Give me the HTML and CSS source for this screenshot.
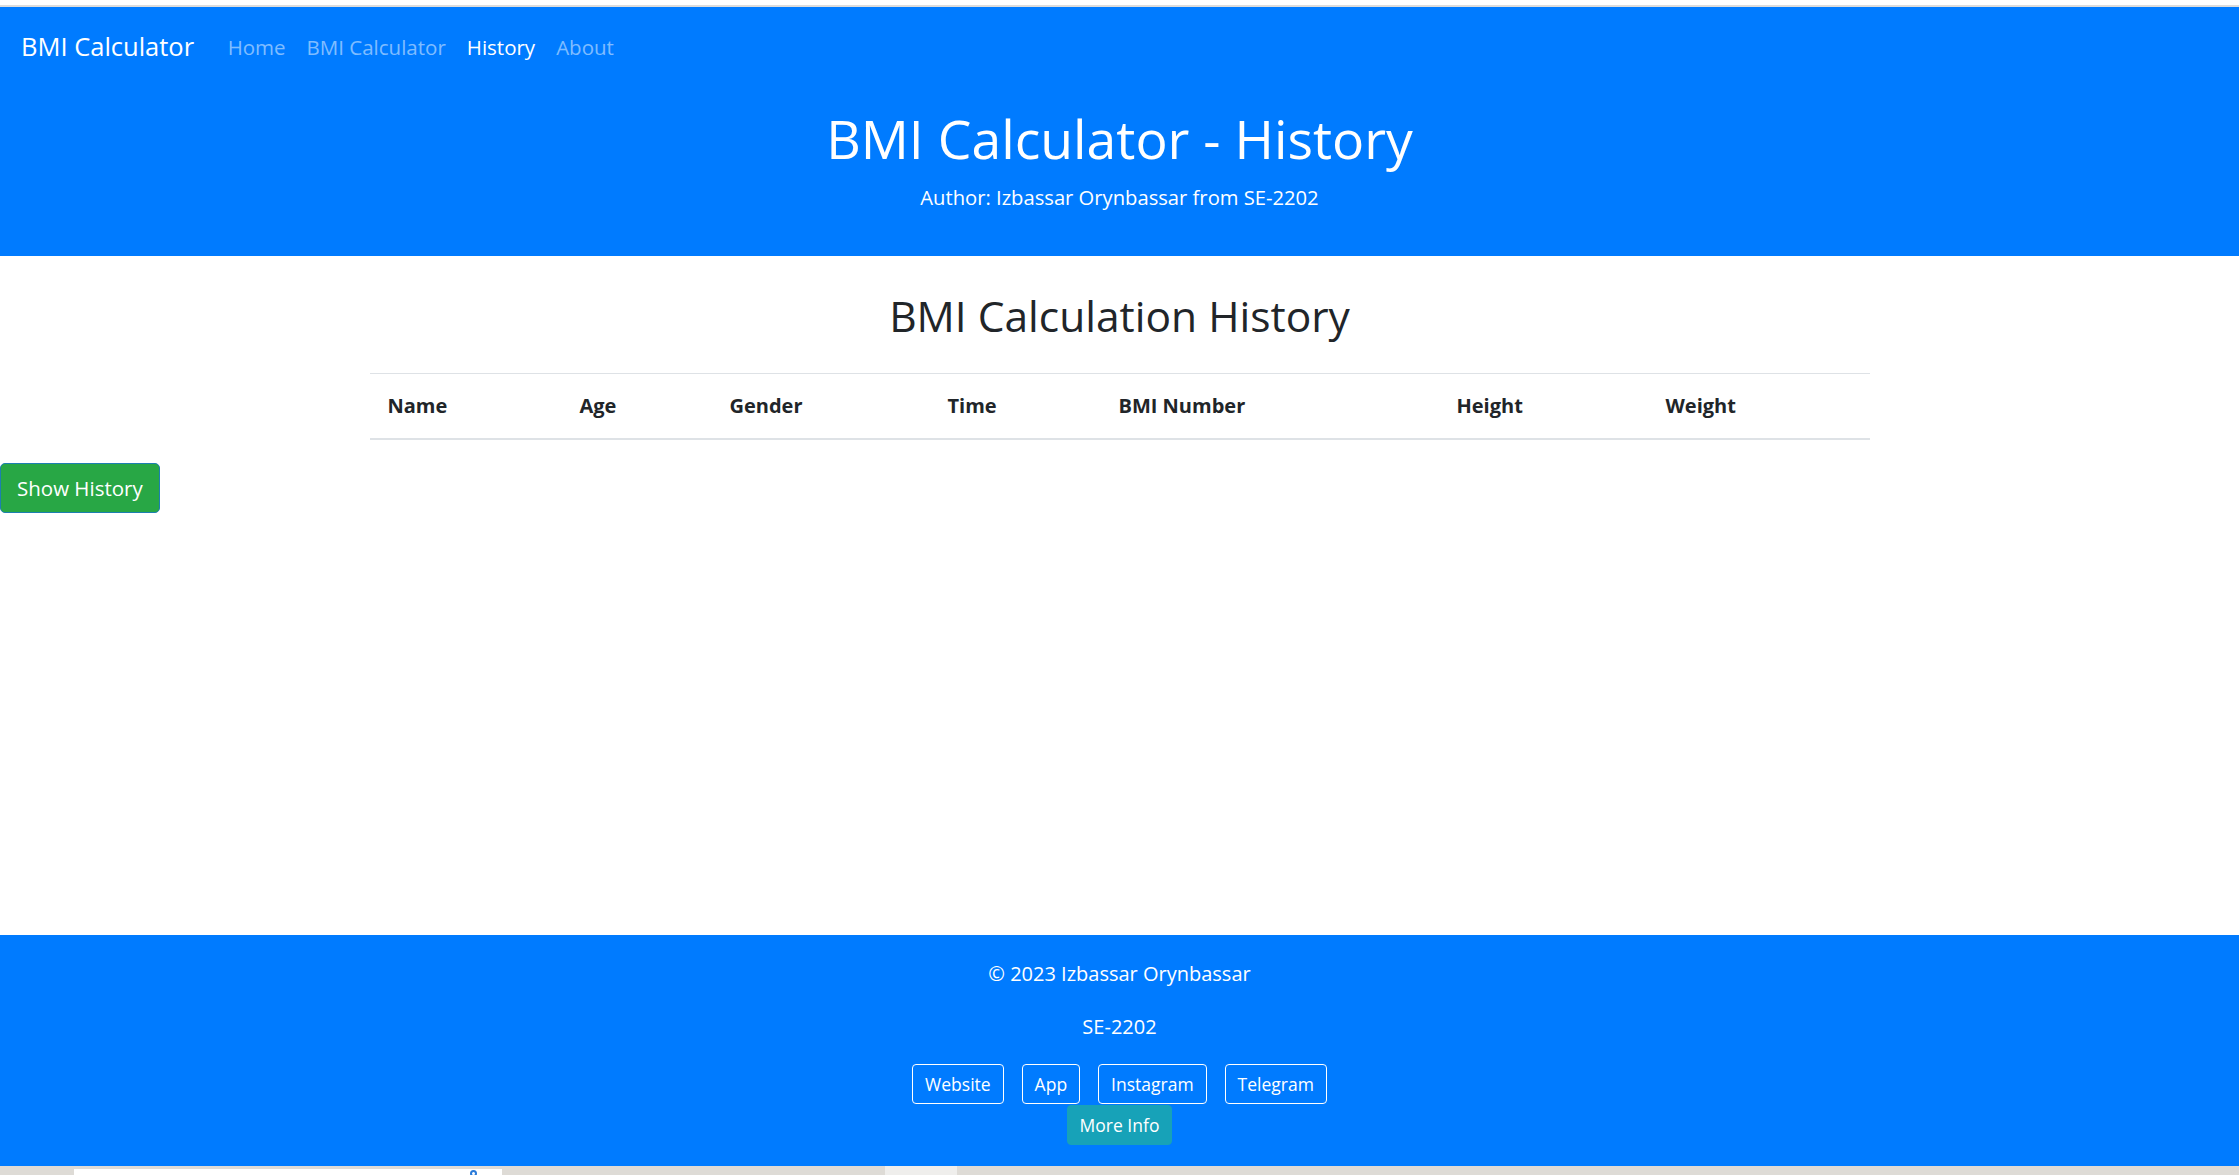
FILE: index.html
```html
<!DOCTYPE html>
<html lang="en">
<head>
<meta charset="utf-8">
<title>BMI Calculator - History</title>
<link rel="stylesheet" href="styles.css">
</head>
<body>
<div class="chrome-top"></div>
<header class="site-header">
  <nav class="navbar">
    <a class="brand" href="#">BMI Calculator</a>
    <ul class="nav">
      <li><a class="nav-link" href="#">Home</a></li>
      <li><a class="nav-link" href="#">BMI Calculator</a></li>
      <li><a class="nav-link active" href="#">History</a></li>
      <li><a class="nav-link" href="#">About</a></li>
    </ul>
  </nav>
  <div class="hero">
    <h1>BMI Calculator - History</h1>
    <p>Author: Izbassar Orynbassar from SE-2202</p>
  </div>
</header>
<main class="content">
  <h2>BMI Calculation History</h2>
  <table class="history">
    <thead>
      <tr>
        <th class="c-name">Name</th>
        <th class="c-age">Age</th>
        <th class="c-gender">Gender</th>
        <th class="c-time">Time</th>
        <th class="c-bmi">BMI Number</th>
        <th class="c-height">Height</th>
        <th class="c-weight">Weight</th>
      </tr>
    </thead>
    <tbody></tbody>
  </table>
  <button class="btn-success" type="button">Show History</button>
</main>
<footer class="site-footer">
  <p>© 2023 Izbassar Orynbassar</p>
  <p>SE-2202</p>
  <div class="links">
    <a class="btn-outline" href="#">Website</a>
    <a class="btn-outline" href="#">App</a>
    <a class="btn-outline" href="#">Instagram</a>
    <a class="btn-outline" href="#">Telegram</a>
  </div>
  <div class="more">
    <a class="btn-info" href="#">More Info</a>
  </div>
</footer>
<div class="taskbar">
  <div class="tb-search"><span class="tb-dot"></span></div>
  <div class="tb-app"></div>
</div>
</body>
</html>
```

FILE: styles.css
```css
* { box-sizing: border-box; }

html, body {
  margin: 0;
  padding: 0;
}

body {
  height: 1175px;
  display: flex;
  flex-direction: column;
  font-family: "Open Sans", "Liberation Sans", sans-serif;
  font-size: 20px;
  line-height: 1.5;
  color: #212529;
  background: #fff;
  overflow: hidden;
}

a { text-decoration: none; }

.chrome-top {
  height: 7px;
  flex: none;
  background: #fff;
  border-bottom: 2px solid #dcdcdc;
}

/* header */
.site-header {
  background: #007bff;
  color: #fff;
  height: 249px;
  flex: none;
}

.navbar {
  display: flex;
  align-items: center;
  padding: 15px 20px 5px 21px;
}

.brand {
  color: #fff;
  font-size: 25.5px;
  line-height: 37.5px;
  padding: 6px 0;
  margin-right: 23px;
}

.nav {
  display: flex;
  list-style: none;
  margin: 0;
  padding: 0;
}

.nav-link {
  display: block;
  padding: 10px 10.5px;
  color: rgba(255, 255, 255, 0.5);
  font-size: 20.5px;
  line-height: 30px;
}

.nav-link.active { color: #fff; }

.hero {
  text-align: center;
  padding-top: 32px;
}

.hero h1 {
  margin: 0 0 13px;
  font-size: 53.5px;
  line-height: 60px;
  font-weight: 400;
}

.hero p {
  margin: 0;
  font-size: 20.2px;
  line-height: 30px;
}

/* main */
.content {
  flex: 1;
  padding-top: 36px;
}

.content h2 {
  margin: 0 0 33px;
  text-align: center;
  font-size: 42.5px;
  line-height: 48px;
  font-weight: 400;
}

.history {
  width: 1500px;
  margin: 0 auto 23px;
  border-collapse: collapse;
}

.history th {
  text-align: left;
  font-weight: 700;
  padding: 17px 18px;
  line-height: 30px;
  border-top: 1px solid #dee2e6;
  border-bottom: 2px solid #dee2e6;
}

.c-name { width: 192px; }
.c-age { width: 150px; }
.c-gender { width: 218px; }
.c-time { width: 171px; }
.c-bmi { width: 338px; }
.c-height { width: 209px; }
.c-weight { width: 222px; }

.btn-success {
  display: block;
  height: 50px;
  width: 160px;
  margin: 0;
  padding: 0 16px;
  background: #28a745;
  color: #fff;
  border: 1px solid #1d7fb0;
  border-radius: 5px;
  font-family: inherit;
  font-size: 20.5px;
  line-height: 30px;
  text-align: left;
}

/* footer */
.site-footer {
  flex: none;
  height: 231px;
  background: #007bff;
  color: #fff;
  text-align: center;
  padding-top: 24px;
}

.site-footer p {
  margin: 0 0 23px;
  font-size: 20px;
  line-height: 30px;
}

.site-footer p + p { margin-bottom: 22px; }

.links {
  display: flex;
  justify-content: center;
  gap: 18px;
}

.btn-outline,
.btn-info {
  display: inline-block;
  height: 40px;
  padding: 0 12px;
  border: 1px solid #fff;
  border-radius: 4px;
  color: #fff;
  font-size: 17.5px;
  line-height: 38px;
}

.more {
  display: flex;
  justify-content: center;
  margin-top: 1px;
}

.btn-info {
  background: #17a2b8;
  border-color: #17a2b8;
  padding: 0 12px;
}

/* taskbar edge */
.taskbar {
  flex: none;
  height: 9px;
  background: #dedbd6;
  position: relative;
  display: flex;
  align-items: flex-end;
}

.tb-search {
  margin-left: 74px;
  width: 428px;
  height: 6px;
  background: #fff;
  position: relative;
}

.tb-dot {
  position: absolute;
  left: 396px;
  top: 1px;
  width: 7px;
  height: 7px;
  border: 2px solid #2a7ad8;
  border-radius: 50%;
}

.tb-app {
  margin-left: 383px;
  width: 72px;
  height: 9px;
  background: #efeeec;
}
```
